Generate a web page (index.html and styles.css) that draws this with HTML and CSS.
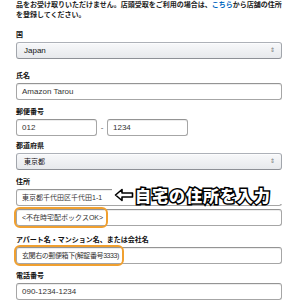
FILE: index.html
```html
<!DOCTYPE html>
<html lang="ja">
<head>
    <meta charset="UTF-8">
    <meta name="viewport" content="width=device-width, initial-scale=1.0">
    <title>住所の登録</title>
    <link rel="stylesheet" href="styles.css">
</head>
<body>
    <div class="container">
        <p class="intro">品をお受け取りいただけません。店頭受取をご利用の場合は、<a href="#">こちら</a>から店舗の住所を登録してください。</p>

        <div class="field field-wide">
            <label>国</label>
            <div class="select">Japan<span class="arrows">&#8661;</span></div>
        </div>

        <div class="field">
            <label>氏名</label>
            <div class="input">Amazon Tarou</div>
        </div>

        <div class="field field-tight">
            <label>郵便番号</label>
            <div class="postal">
                <div class="input input-short">012</div>
                <span class="dash">-</span>
                <div class="input input-short">1234</div>
            </div>
        </div>

        <div class="field">
            <label>都道府県</label>
            <div class="select select-ja">東京都<span class="arrows">&#8661;</span></div>
        </div>

        <div class="field field-line">
            <label>住所</label>
            <div class="input-wrap">
                <div class="input input-ja">東京都千代田区千代田1-1</div>
                <div class="note">
                    <svg width="20" height="14" viewBox="0 0 20 14">
                        <path d="M1.5 7 L8 1.5 L8 5 L18.5 5 L18.5 9 L8 9 L8 12.5 Z" fill="#fff" stroke="#000" stroke-width="1.6" stroke-linejoin="round"/>
                    </svg>
                    <span class="note-text">自宅の住所を入力</span>
                </div>
            </div>
        </div>

        <div class="field field-mid">
            <div class="input-wrap">
                <div class="input input-ja">&lt;不在時宅配ボックスOK&gt;</div>
                <span class="mark mark-box"></span>
            </div>
        </div>

        <div class="field">
            <label>アパート名・マンション名、または会社名</label>
            <div class="input-wrap">
                <div class="input input-ja input-narrow">玄関右の郵便箱下(解錠番号3333)</div>
                <span class="mark mark-apt"></span>
            </div>
        </div>

        <div class="field">
            <label>電話番号</label>
            <div class="input">090-1234-1234</div>
        </div>
    </div>
</body>
</html>
```

FILE: styles.css
```css
body {
    margin: 0;
    background: #fff;
    font-family: "Liberation Sans", "Noto Sans CJK JP", sans-serif;
    color: #111;
}

.container {
    padding: 0 18px 0 16px;
}

.intro {
    margin: 0 0 9px;
    font-size: 7px;
    line-height: 10px;
    font-weight: bold;
    color: #222;
}

.intro a {
    color: #0066c0;
    text-decoration: none;
}

.field {
    margin-bottom: 6px;
}

.field-wide {
    margin-bottom: 11px;
}

.field-tight {
    margin-bottom: 4px;
}

.field-line {
    margin-bottom: 3px;
}

.field-mid {
    margin-bottom: 8px;
}

label {
    display: block;
    font-size: 7px;
    line-height: 11px;
    font-weight: bold;
    margin-bottom: 2px;
}

.input,
.select {
    box-sizing: border-box;
    height: 17px;
    padding: 0 5px;
    font-size: 8px;
    line-height: 15px;
    color: #333;
    border: 1px solid #a6a6a6;
    border-top-color: #949494;
    border-radius: 3px;
    box-shadow: 0 1px 0 rgba(255, 255, 255, 0.5), inset 0 1px 0 rgba(0, 0, 0, 0.07);
    background: #fff;
}

.input-ja,
.select-ja {
    font-size: 7px;
}

.input-narrow {
    letter-spacing: -0.4px;
}

.select {
    position: relative;
    padding-left: 7px;
    color: #111;
    border-color: #adb1b8 #a2a6ac #8d9096;
    background: linear-gradient(#f7f8fa, #e7e9ec);
    box-shadow: 0 1px 0 rgba(255, 255, 255, 0.6) inset;
}

.arrows {
    position: absolute;
    right: 6px;
    top: 0;
    font-size: 6px;
    color: #777;
}

.postal {
    display: flex;
    align-items: center;
}

.input-short {
    width: 81px;
}

.dash {
    width: 10px;
    text-align: center;
    font-size: 8px;
    color: #555;
}

.input-wrap {
    position: relative;
}

.note {
    position: absolute;
    left: 96px;
    right: 0;
    top: -4px;
    height: 19px;
    display: flex;
    align-items: center;
    gap: 1px;
    padding-left: 2px;
    background: #fff;
}

.note-text {
    font-family: "Noto Sans CJK JP", sans-serif;
    font-size: 16px;
    font-weight: 900;
    letter-spacing: 1px;
    line-height: 1;
    color: #fff;
    -webkit-text-stroke: 3px #000;
    paint-order: stroke fill;
}

.mark {
    position: absolute;
    left: -2px;
    top: -2px;
    height: 17px;
    border: 2px solid #f0a030;
    border-radius: 6px;
}

.mark-box {
    width: 90px;
}

.mark-apt {
    width: 106px;
}
```
